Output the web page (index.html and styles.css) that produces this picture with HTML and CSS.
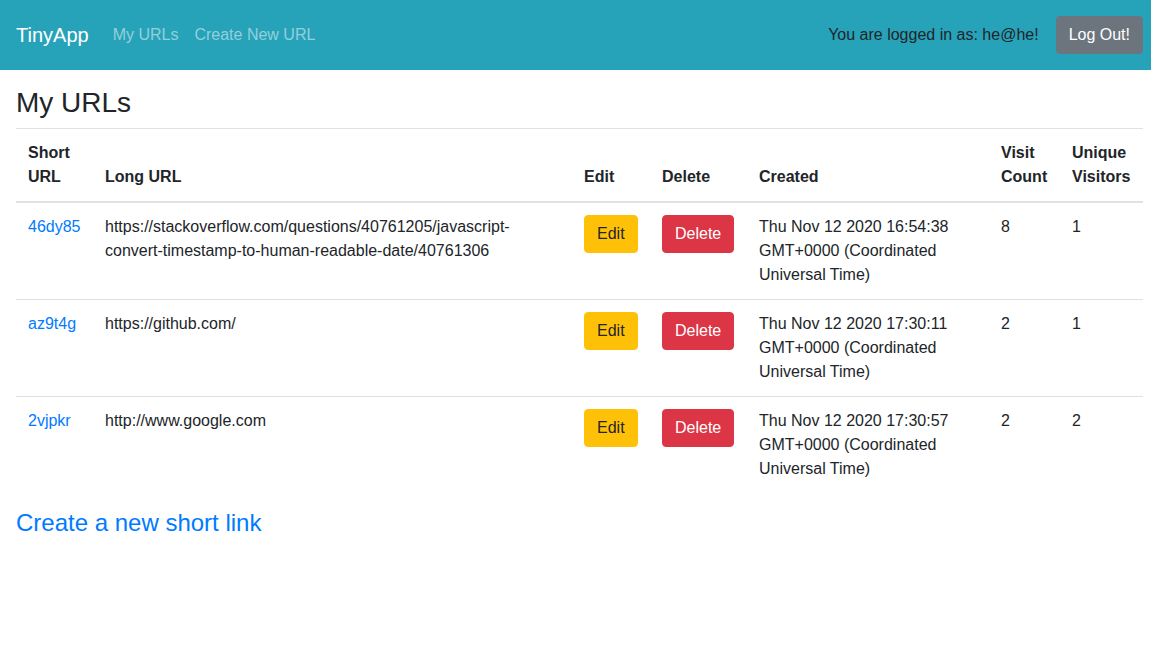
FILE: index.html
```html
<!DOCTYPE html>
<html lang="en">
<head>
<meta charset="utf-8">
<title>TinyApp</title>
<link rel="stylesheet" href="styles.css">
</head>
<body>
<nav class="navbar">
  <a class="brand" href="#">TinyApp</a>
  <div class="nav-links">
    <a class="nav-link" href="#">My URLs</a>
    <a class="nav-link" href="#">Create New URL</a>
  </div>
  <div class="nav-right">
    <span class="nav-text">You are logged in as: he@he!</span>
    <button class="btn btn-secondary">Log Out!</button>
  </div>
</nav>
<main class="content">
  <h3 class="title">My URLs</h3>
  <table class="table">
    <colgroup>
      <col class="c-short"><col class="c-long"><col class="c-edit"><col class="c-del"><col class="c-created"><col class="c-visit"><col class="c-unique">
    </colgroup>
    <thead>
      <tr>
        <th>Short URL</th>
        <th>Long URL</th>
        <th>Edit</th>
        <th>Delete</th>
        <th>Created</th>
        <th>Visit Count</th>
        <th>Unique Visitors</th>
      </tr>
    </thead>
    <tbody>
      <tr>
        <td><a href="#">46dy85</a></td>
        <td>https://stackoverflow.com/questions/40761205/javascript-convert-timestamp-to-human-readable-date/40761306</td>
        <td><button class="btn btn-warning">Edit</button></td>
        <td><button class="btn btn-danger">Delete</button></td>
        <td>Thu Nov 12 2020 16:54:38 GMT+0000 (Coordinated Universal Time)</td>
        <td>8</td>
        <td>1</td>
      </tr>
      <tr>
        <td><a href="#">az9t4g</a></td>
        <td>https://github.com/</td>
        <td><button class="btn btn-warning">Edit</button></td>
        <td><button class="btn btn-danger">Delete</button></td>
        <td>Thu Nov 12 2020 17:30:11 GMT+0000 (Coordinated Universal Time)</td>
        <td>2</td>
        <td>1</td>
      </tr>
      <tr>
        <td><a href="#">2vjpkr</a></td>
        <td>http://www.google.com</td>
        <td><button class="btn btn-warning">Edit</button></td>
        <td><button class="btn btn-danger">Delete</button></td>
        <td>Thu Nov 12 2020 17:30:57 GMT+0000 (Coordinated Universal Time)</td>
        <td>2</td>
        <td>2</td>
      </tr>
    </tbody>
  </table>
  <h4 class="create"><a href="#">Create a new short link</a></h4>
</main>
</body>
</html>
```
FILE: styles.css
```css
* { box-sizing: border-box; }
html, body { margin: 0; padding: 0; }
body {
  font-family: "Liberation Sans", Arial, sans-serif;
  font-size: 16px;
  line-height: 1.5;
  color: #212529;
  background: #fff;
}
a { color: #007bff; text-decoration: none; }

.navbar {
  display: flex;
  align-items: center;
  height: 70px;
  padding: 0 8px 0 16px;
  background: #26a2b9;
}
.brand {
  color: #fff;
  font-size: 20px;
  line-height: 30px;
  margin-right: 16px;
}
.nav-links { display: flex; }
.nav-link {
  color: rgba(255, 255, 255, 0.5);
  padding: 8px;
}
.nav-right {
  margin-left: auto;
  display: flex;
  align-items: center;
  gap: 17px;
}
.nav-text { color: #212529; }

.btn {
  display: inline-block;
  font-family: inherit;
  font-size: 16px;
  line-height: 24px;
  padding: 6px 12px;
  border: 1px solid transparent;
  border-radius: 4px;
  cursor: pointer;
}
.btn-secondary { background: #6c757d; border-color: #6c757d; color: #fff; }
.btn-warning { background: #ffc107; border-color: #ffc107; color: #212529; }
.btn-danger { background: #dc3545; border-color: #dc3545; color: #fff; }

.content { padding: 16px 8px 0 16px; }
.title {
  margin: 0 0 8px;
  font-size: 28px;
  font-weight: 500;
  line-height: 1.2;
}
.table {
  width: 100%;
  table-layout: fixed;
  border-collapse: collapse;
  margin-bottom: 16px;
}
.c-short { width: 77px; }
.c-long { width: 479px; }
.c-edit { width: 78px; }
.c-del { width: 97px; }
.c-created { width: 242px; }
.c-visit { width: 71px; }
.c-unique { width: 83px; }
.table th, .table td {
  padding: 12px;
  vertical-align: top;
  border-top: 1px solid #dee2e6;
  text-align: left;
}
.table th {
  font-weight: 700;
  vertical-align: bottom;
  border-bottom: 2px solid #dee2e6;
}
.create {
  margin: 0;
  font-size: 24px;
  font-weight: 500;
  line-height: 1.2;
}
```
